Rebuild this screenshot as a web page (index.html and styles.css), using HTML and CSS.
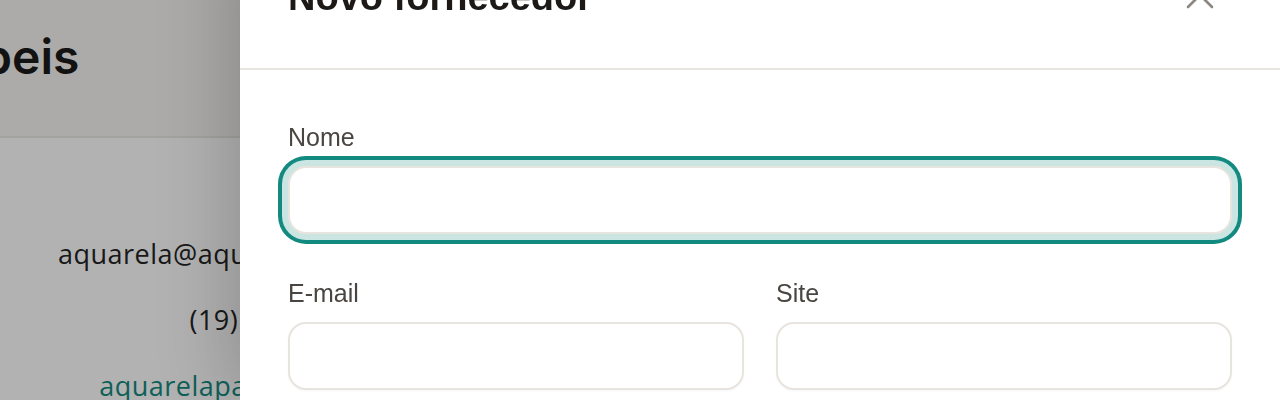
FILE: index.html
```html
<!DOCTYPE html>
<html lang="pt-BR">
<head>
    <meta charset="UTF-8">
    <meta name="viewport" content="width=device-width, initial-scale=1.0">
    <title>Fornecedores</title>
    <link rel="stylesheet" href="styles.css">
</head>
<body>
    <div class="page">
        <header class="page-header">
            <h1>Papeis</h1>
        </header>
        <div class="details">
            <p class="detail">aquarela@aquarelapapeis.com.br</p>
            <p class="detail">(19) 3254-889</p>
            <p class="detail detail-link">aquarelapapeis.com.br/loja</p>
        </div>
    </div>

    <div class="overlay"></div>

    <aside class="drawer">
        <div class="drawer-header">
            <h2>Novo fornecedor</h2>
            <button type="button" class="close-button" aria-label="Fechar">
                <svg width="28" height="28" viewBox="0 0 28 28" fill="none" stroke="currentColor" stroke-width="2.6" stroke-linecap="round">
                    <path d="M2 2L26 26M26 2L2 26"/>
                </svg>
            </button>
        </div>

        <form class="drawer-body">
            <div class="form-group">
                <label for="nome">Nome</label>
                <input type="text" id="nome" class="input is-focused">
            </div>

            <div class="form-row">
                <div class="form-group">
                    <label for="email">E-mail</label>
                    <input type="text" id="email" class="input">
                </div>
                <div class="form-group">
                    <label for="site">Site</label>
                    <input type="text" id="site" class="input">
                </div>
            </div>
        </form>
    </aside>
</body>
</html>
```

FILE: styles.css
```css
body {
    margin: 0;
    font-family: "Liberation Sans", Arial, sans-serif;
    background-color: #fff;
    color: #1c1917;
    overflow: hidden;
}

.page {
    margin-left: -124px;
}
.page-header {
    height: 138px;
    box-sizing: border-box;
    padding: 28px 48px 0;
    background-color: #f6f5f3;
    border-bottom: 2px solid #ebe8e4;
}
.page-header h1 {
    margin: 0;
    font-family: Inter, sans-serif;
    font-size: 48px;
    font-weight: 600;
    line-height: 58px;
    color: #1a1a1a;
}
.details {
    width: 804px;
    padding-top: 83px;
    text-align: center;
}
.detail {
    margin: 0;
    font-family: "Open Sans", sans-serif;
    font-size: 27px;
    letter-spacing: 0.5px;
    line-height: 66px;
    color: #242424;
}
.detail-link {
    color: #138a80;
}

.overlay {
    position: fixed;
    inset: 0;
    background-color: rgba(0, 0, 0, 0.3);
}

/* drawer */
.drawer {
    position: fixed;
    top: -74px;
    right: 0;
    bottom: 0;
    width: 1040px;
    background-color: #fff;
    box-shadow: -10px 0 70px rgba(0, 0, 0, 0.2);
}
.drawer-header {
    display: flex;
    align-items: center;
    justify-content: space-between;
    padding: 48px 56px 48px 48px;
    border-bottom: 2px solid #e9e6e1;
}
.drawer-header h2 {
    margin: 0;
    font-size: 38px;
    font-weight: bold;
    line-height: 46px;
    color: #1c1917;
}
.close-button {
    display: flex;
    align-items: center;
    justify-content: center;
    width: 48px;
    height: 48px;
    margin-top: -4px;
    padding: 0;
    border: none;
    background: none;
    color: #8c8781;
    cursor: pointer;
}

.drawer-body {
    padding: 48px;
}
.form-group {
    margin-bottom: 40px;
}
.form-row {
    display: grid;
    grid-template-columns: 1fr 1fr;
    column-gap: 32px;
}
label {
    display: block;
    margin-bottom: 10px;
    font-size: 25px;
    line-height: 38px;
    color: #4a4540;
}
.input {
    display: block;
    width: 100%;
    height: 68px;
    box-sizing: border-box;
    padding: 0 20px;
    border: 2px solid #e8e4df;
    border-radius: 18px;
    font-family: inherit;
    font-size: 25px;
    color: #1c1917;
    background-color: #fff;
    box-shadow: 0 1px 2px rgba(0, 0, 0, 0.04);
    outline: none;
}
.input.is-focused {
    box-shadow: 0 0 0 6px #cae5e2, 0 0 0 10px #138a80;
}
```
